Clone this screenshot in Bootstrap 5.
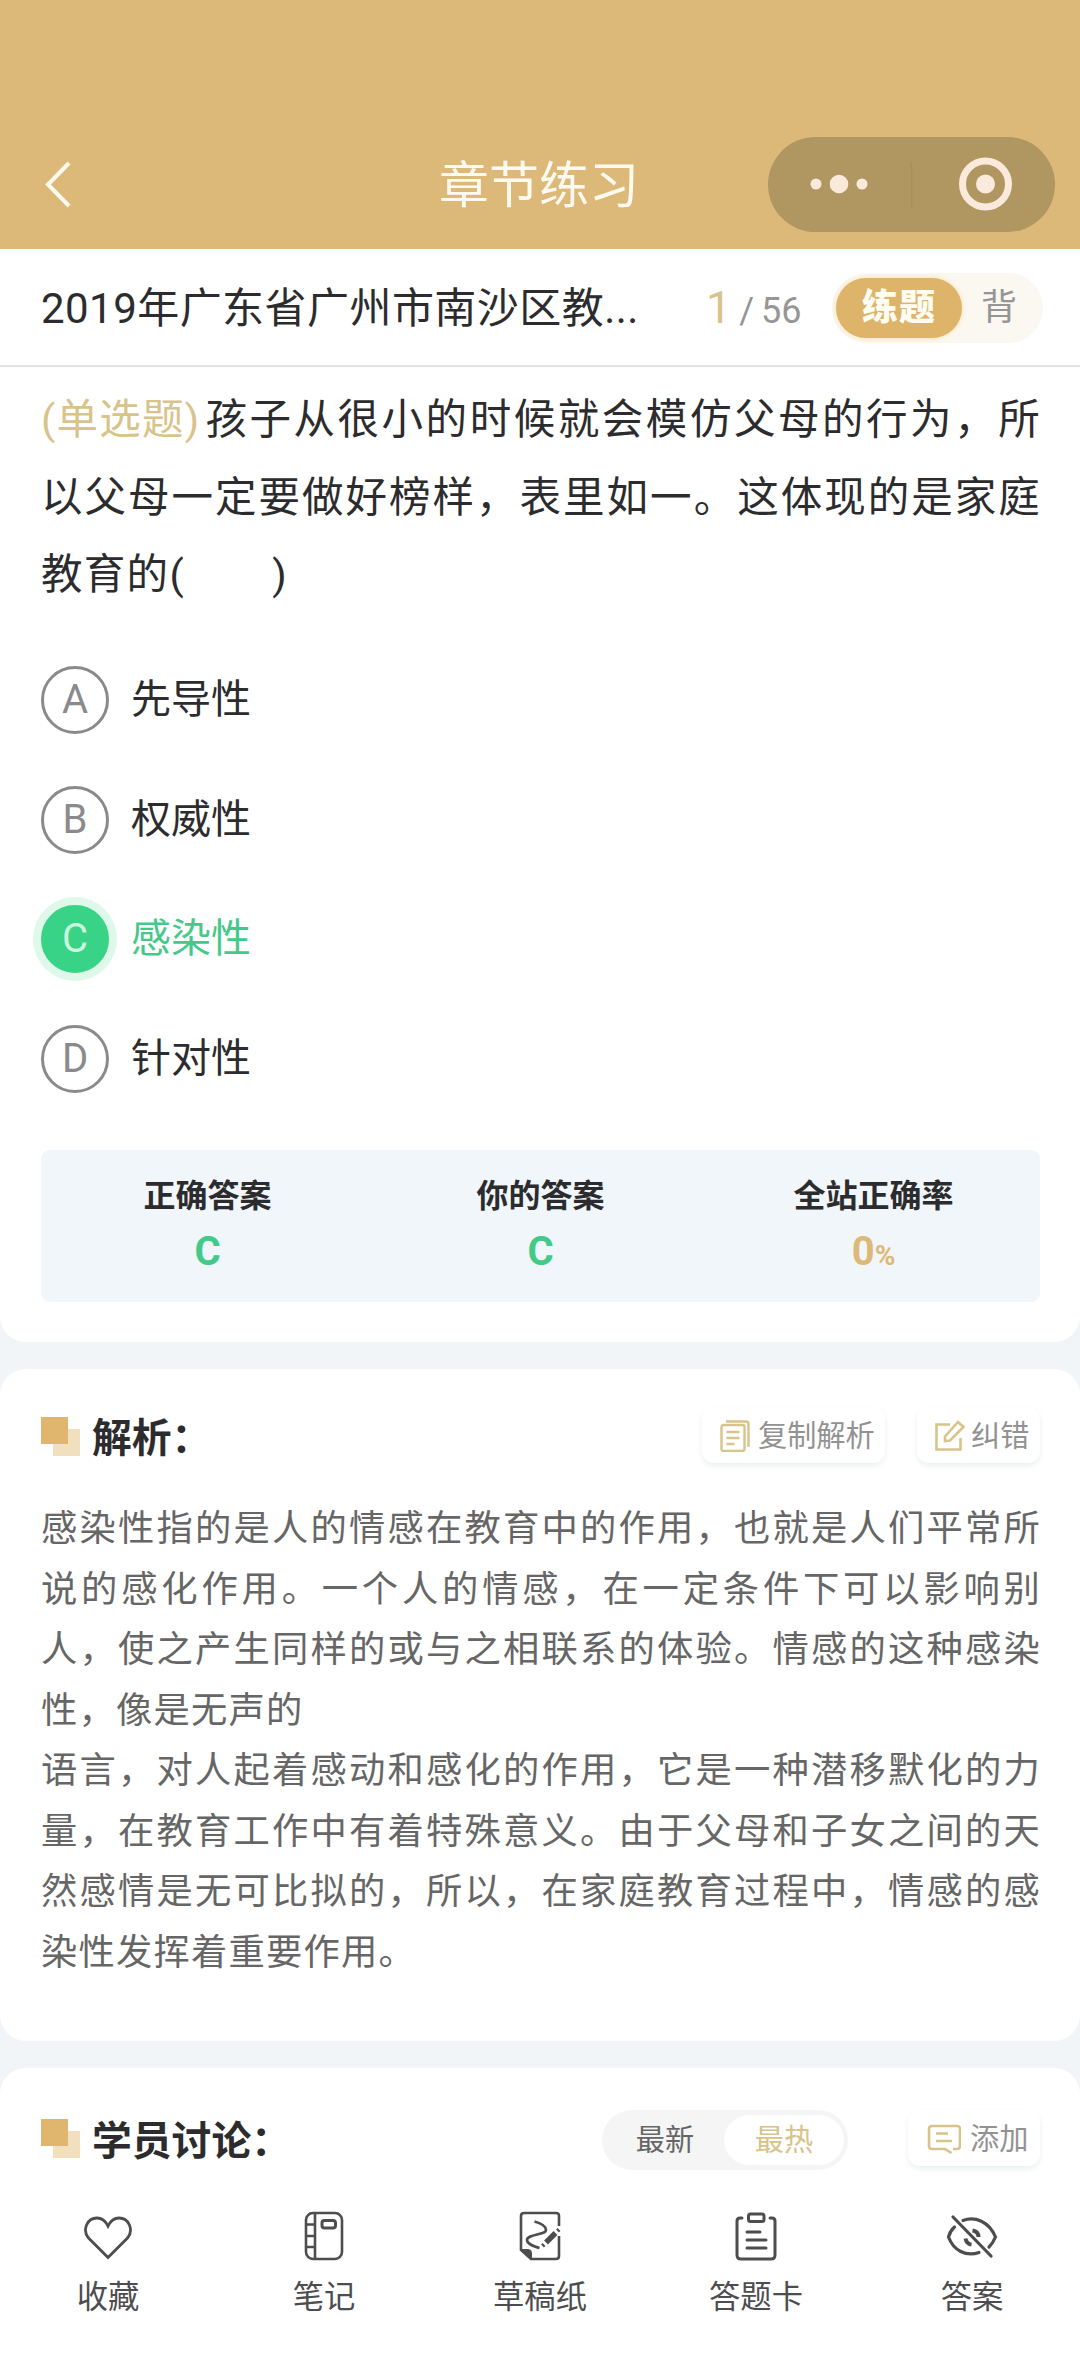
<!DOCTYPE html>
<html lang="zh-CN">
<head>
<meta charset="utf-8">
<meta name="viewport" content="width=device-width, initial-scale=1">
<title>章节练习</title>
<link href="https://cdn.jsdelivr.net/npm/bootstrap@5.3.0/dist/css/bootstrap.min.css" rel="stylesheet">
<style>
:root{--gold:#dcb978;--gold-soft:#d8c38a;--green:#38d386;--ink:#2c2c2e;--gray:#8f8f8f}
body{font-family:Roboto,"Noto Sans CJK SC",sans-serif;background:#f1f5f8;color:var(--ink);width:1080px;height:2376px;overflow:hidden;line-height:1.5}
svg{display:block;fill:none;stroke:currentColor;flex:none}
.topbar{height:249px;background:var(--gold);padding:119px 25px 0 23px;display:grid!important;grid-template-columns:1fr auto 1fr}
.topbar h1{font-size:50px;font-weight:400;color:#fffaf0;line-height:74px;height:130px;padding-top:30px;margin:0}
.back{margin-left:18px;color:#fffaf0}
.capsule{width:287px;height:95px;margin-top:18px;background:#b09660;border-radius:48px;color:#fbeadb}
.titlebar{height:118px;border-bottom:2px solid #e4e4e6;padding:1px 37px 0 41px}
.paper-name{font-size:42px;letter-spacing:.45px;width:640px;white-space:nowrap;padding-top:2px}
.pager{padding-left:25px}
.now{font-size:45px;color:var(--gold-soft);line-height:1}
.total{font-size:36px;color:#969696;line-height:1;word-spacing:-2px}
.mode{width:211px;height:70px;border-radius:35px;background:#fbf7f1;padding:5px 4px;font-size:36px;line-height:61px}
.mode b{width:126px;border-radius:30px;height:60px;background:#ddb46a;color:#fffdf2;font-weight:900;letter-spacing:1px;text-align:center;box-shadow:0 0 5px #f7dfa8}
.mode span{color:#959595;margin-left:19px}
.panel{background:#fff;border-radius:26px;padding-left:41px;padding-right:40px}
.panel-quiz{height:975px;border-radius:0 0 26px 26px}
.panel-note{height:672px;margin-top:27px}
.panel-talk{height:308px;margin-top:27px;border-radius:26px 26px 0 0}
.stem{padding-top:14px;font-size:41.5px;letter-spacing:1.3px;line-height:77.7px}
.ln{display:block;white-space:nowrap;margin-right:-1px}
.full{text-align:justify;text-align-last:justify}
.kind{color:var(--gold-soft);letter-spacing:0;margin-right:5px}
.opts{padding-top:26px}
.opt{height:119.7px;font-size:40px}
.disc{width:68px;height:68px;border:3px solid #8a8a8d;border-radius:50%;color:#8a8a8d;margin-right:22px;font-size:40px;line-height:62px;text-align:center}
.hit{color:#45c98b}
.hit .disc{background:var(--green);border-color:var(--green);color:#c9f8df;box-shadow:0 0 0 8px #def8ea}
.score{height:152px;background:#f0f6f9;border-radius:9px;margin-top:31px}
.score dt{font-size:32px;font-weight:700;line-height:48px;padding-top:22px}
.score dd{font-size:40px;font-weight:700;line-height:48px;color:#43ca89;margin:8px 0 0}
.score .rate{color:var(--gold)}
.score small{font-size:28px}
.head{padding-top:38px}
.marker{width:39px;height:39px;background:linear-gradient(#e0b66e,#e0b66e) 0 0/27px 27px no-repeat,linear-gradient(#f1dfbd,#f1dfbd) 12px 12px/27px 27px no-repeat;margin:10px 12px 0 0}
.head h2{font-size:39.8px;font-weight:700;line-height:63px;margin:0}
.tool{height:56px;border-radius:12px;background:#fff;box-shadow:0 3px 6px #ecf0f1;font-size:29.2px;color:#929292;line-height:56px;white-space:nowrap;border:0;padding:1px 0 0}
.tool svg{color:var(--gold-soft)}
.tool-copy{width:183px;padding-left:18px;margin-right:32px}
.tool-fix{width:123px;padding-left:18px}
.tool-add{width:132px;padding-left:19px}
.body-text{padding-top:29px;font-size:36.3px;letter-spacing:1.2px;line-height:60.55px;color:#666}
.panel-talk .head{padding-top:42px}
.panel-talk .marker{margin-top:9px}
.sort{width:246px;height:60px;border-radius:30px;background:#f5f5f5;padding:5px 4px;font-size:29.2px;line-height:50px;color:#666;margin-right:60px}
.sort b{font-weight:400;width:120px;background:#fff;color:var(--gold-soft);border-radius:25px;text-align:center}
.sort span{width:118px;text-align:center}
.tabs{margin:38px -40px 0 -41px}
.tabs a{width:216px;color:#4d4d4f;font-size:31.3px;line-height:48px;text-decoration:none}
.tabs svg{margin-bottom:13px}
</style>
<script src="https://cdn.jsdelivr.net/npm/bootstrap@5.3.0/dist/js/bootstrap.bundle.min.js"></script>
</head>
<body>
<header class="topbar">
  <svg class="back" width="34" height="130" viewBox="0 0 34 130" stroke-width="4"><path d="M28 44 7 65.500 28 87"/></svg>
  <h1>章节练习</h1>
  <div class="capsule ms-auto">
    <svg width="287" height="95" viewBox="0 0 287 95"><g fill="currentColor" stroke="none"><circle cx="48" cy="47" r="5.500"/><circle cx="71" cy="47" r="9.300"/><circle cx="94" cy="47" r="5.500"/><circle cx="217.500" cy="47" r="9.500"/></g><circle cx="217.500" cy="47" r="23" stroke-width="7"/><path d="M143.500 25v46" stroke="#a98f5b" stroke-width="1.500"/></svg>
  </div>
</header>
<section class="titlebar bg-white d-flex align-items-center">
  <div class="paper-name">2019年广东省广州市南沙区教...</div>
  <div class="pager d-flex align-items-baseline me-auto"><span class="now">1</span><span class="total ms-2">/ 56</span></div>
  <div class="mode d-flex"><b>练题</b><span>背</span></div>
</section>
<main>
<section class="panel panel-quiz">
  <div class="stem">
    <span class="ln full"><span class="kind">(单选题)</span>孩子从很小的时候就会模仿父母的行为，所</span>
    <span class="ln full">以父母一定要做好榜样，表里如一。这体现的是家庭</span>
    <span class="ln">教育的(&emsp;&emsp;)</span>
  </div>
  <div class="opts">
    <div class="opt d-flex align-items-center"><span class="disc">A</span>先导性</div>
    <div class="opt d-flex align-items-center"><span class="disc">B</span>权威性</div>
    <div class="opt d-flex align-items-center hit"><span class="disc">C</span>感染性</div>
    <div class="opt d-flex align-items-center"><span class="disc">D</span>针对性</div>
  </div>
  <div class="score row g-0 text-center">
    <dl class="col m-0"><dt>正确答案</dt><dd>C</dd></dl>
    <dl class="col m-0"><dt>你的答案</dt><dd>C</dd></dl>
    <dl class="col m-0"><dt>全站正确率</dt><dd class="rate">0<small>%</small></dd></dl>
  </div>
</section>
<section class="panel panel-note">
  <div class="head d-flex align-items-start">
    <span class="marker"></span><h2 class="me-auto">解析：</h2>
    <button class="tool tool-copy d-flex align-items-center"><svg class="me-2" width="30" height="32" viewBox="0 0 30 32" stroke-width="2.400"><rect x="1.500" y="5" width="23" height="26" rx="2"/><path d="M6 1.500h20q2.500 0 2.500 2.500v23M6.500 12h13M6.500 18h13M6.500 24h8"/></svg>复制解析</button>
    <button class="tool tool-fix d-flex align-items-center"><svg style="margin-right:6px" width="30" height="32" viewBox="0 0 30 32" stroke-width="2.600"><path d="M15 4.500H1.500v25h24V18M10 16.500 23 2l5.500 5L15 20.500l-5 .5z"/></svg>纠错</button>
  </div>
  <div class="body-text">
    <span class="ln full">感染性指的是人的情感在教育中的作用，也就是人们平常所</span>
    <span class="ln full">说的感化作用。一个人的情感，在一定条件下可以影响别</span>
    <span class="ln full">人，使之产生同样的或与之相联系的体验。情感的这种感染</span>
    <span class="ln">性，像是无声的</span>
    <span class="ln full">语言，对人起着感动和感化的作用，它是一种潜移默化的力</span>
    <span class="ln full">量，在教育工作中有着特殊意义。由于父母和子女之间的天</span>
    <span class="ln full">然感情是无可比拟的，所以，在家庭教育过程中，情感的感</span>
    <span class="ln">染性发挥着重要作用。</span>
  </div>
</section>
<section class="panel panel-talk">
  <div class="head d-flex align-items-start">
    <span class="marker"></span><h2 class="me-auto">学员讨论：</h2>
    <div class="sort d-flex"><span>最新</span><b>最热</b></div>
    <button class="tool tool-add d-flex align-items-center"><svg style="margin-right:9px" width="34" height="30" viewBox="0 0 34 30" stroke-width="2.600"><path d="M24.500 29 18 25H5q-3 0-3-3V5q0-3 3-3h25q3 0 3 3v17q0 3-3 3h-4M9 9.500h12M9 17h16"/></svg>添加</button>
  </div>
  <nav class="tabs d-flex">
    <a class="d-flex flex-column align-items-center" href="#"><svg width="50" height="50" viewBox="0 0 50 50" stroke-width="2.800"><path d="M25 46.500 5.500 27C-1 19 4 7 14 7q7 0 11 8 4-8 11-8c10 0 15 12 8.500 20z"/></svg>收藏</a>
    <a class="d-flex flex-column align-items-center" href="#"><svg width="50" height="50" viewBox="0 0 50 50" stroke-width="2.600"><rect x="7" y="2" width="36" height="46" rx="7"/><path d="M16 2v46M7 13.500h9M7 25h9M7 36h9"/><rect x="23" y="9.500" width="13.500" height="7.500" rx="2.500" stroke-width="3"/></svg>笔记</a>
    <a class="d-flex flex-column align-items-center" href="#"><svg width="50" height="50" viewBox="0 0 50 50" stroke-width="2.600"><path d="M44 15V5q0-3-3-3H9Q6 2 6 5v34l10 9h25q3 0 3-3V25"/><path d="M6 38.500h7q3.500 0 3.500 3.500v6z" fill="currentColor" stroke-width="1"/><path d="M19.500 10.500C25 12 31 15 31 19c0 5-19 4-19 10 0 4 6 6 12.500 8"/><path d="m31 31.500 9.500-9.500" stroke-width="5.500"/><path d="m27.500 35 1.500-1.500M42.500 20l1.500-1.500" stroke-width="4"/></svg>草稿纸</a>
    <a class="d-flex flex-column align-items-center" href="#"><svg width="50" height="50" viewBox="0 0 50 50" stroke-width="3" stroke-linecap="round"><path d="M11 7H9Q6 7 6 10v34q0 4 4 4h30q4 0 4-4V10q0-3-3-3h-2M16 21h13M16 29h19M16 37h19"/><rect x="17.500" y="3" width="15.500" height="7.500" rx="2"/></svg>答题卡</a>
    <a class="d-flex flex-column align-items-center" href="#"><svg width="54" height="50" viewBox="0 0 54 50" stroke-width="3.200" stroke-linecap="round"><path d="M8 6 46 45M18 9.500c12-4.500 26 1 32.500 16.500q-2.500 6-6.500 10M34 41.500c-13 4.500-25.500-2-30.500-15.500q1.500-6 6-10"/><path d="M27.500 19.500q6 1 6 6.500M20.500 27.500q1 5.500 6 6" stroke-width="4" stroke-linecap="butt"/></svg>答案</a>
  </nav>
</section>
</main>
</body>
</html>
